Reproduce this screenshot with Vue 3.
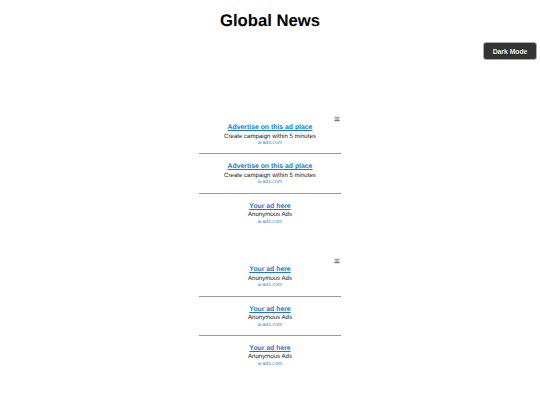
<script setup>
const blocks = [
  [
    { title: 'Advertise on this ad place', sub: 'Create campaign within 5 minutes' },
    { title: 'Advertise on this ad place', sub: 'Create campaign within 5 minutes' },
    { title: 'Your ad here', sub: 'Anonymous Ads' }
  ],
  [
    { title: 'Your ad here', sub: 'Anonymous Ads' },
    { title: 'Your ad here', sub: 'Anonymous Ads' },
    { title: 'Your ad here', sub: 'Anonymous Ads' }
  ]
]
</script>

<template>
  <div class="page">
    <h1 class="title">Global News</h1>
    <button class="mode">Dark Mode</button>
    <div class="ads">
      <div v-for="(block, i) in blocks" :key="i" class="block">
        <svg class="flag" width="6" height="6" viewBox="0 0 6 6">
          <rect width="6" height="6" fill="#e6e6e6" />
          <path d="M.5 1.5h5" stroke="#aaa" stroke-width="1" />
          <path d="M1.5 3h3" stroke="#888" stroke-width="1" />
          <path d="M.5 4.5h5" stroke="#777" stroke-width="1" />
        </svg>
        <div v-for="(ad, j) in block" :key="j" class="ad">
          <a class="ad-title">{{ ad.title }}</a>
          <div class="ad-sub">{{ ad.sub }}</div>
          <div class="ad-domain">a-ads.com</div>
        </div>
      </div>
    </div>
  </div>
</template>

<style scoped>
.page {
  position: relative;
  width: 540px;
  height: 405px;
  background: #fff;
  font-family: "Liberation Sans", Arial, sans-serif;
  text-rendering: geometricPrecision;
  overflow: hidden;
}
.title {
  margin: 0;
  padding-top: 10px;
  height: 32px;
  line-height: 22px;
  text-align: center;
  font-size: 16.7px;
  font-weight: 700;
  color: #000;
  box-sizing: border-box;
}
.mode {
  position: absolute;
  top: 42px;
  right: 3px;
  width: 54px;
  height: 18px;
  padding: 0;
  border: 1px solid #aaa;
  border-radius: 3px;
  background: #333;
  color: #eee;
  font-family: inherit;
  font-size: 6.8px;
  font-weight: 700;
}
.ads {
  display: flex;
  flex-direction: column;
  align-items: center;
  gap: 24.5px;
  padding-top: 84px;
}
.block {
  position: relative;
  width: 142px;
}
.flag {
  position: absolute;
  top: 0;
  right: 1px;
}
.ad {
  height: 38.3px;
  margin-bottom: 1px;
  box-sizing: border-box;
  padding-top: 8px;
  text-align: center;
  border-bottom: 1px solid #999;
}
.ad:last-child {
  border-bottom: none;
}
.ad-title {
  display: block;
  font-size: 6.85px;
  line-height: 8.5px;
  font-weight: 700;
  color: #1c78cf;
  text-decoration: underline;
}
.ad-sub {
  font-size: 6.1px;
  line-height: 7.5px;
  color: #222;
}
.ad-domain {
  font-size: 5.25px;
  line-height: 6px;
  color: #4a8cd8;
}
</style>
